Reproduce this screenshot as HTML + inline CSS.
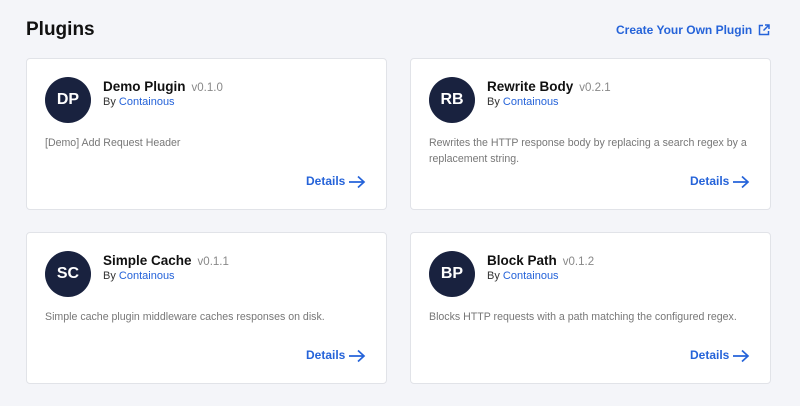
<!DOCTYPE html>
<html><head><style>
*{margin:0;padding:0;box-sizing:border-box}
body{width:800px;height:406px;background:#f4f5f9;font-family:"Liberation Sans",sans-serif;position:relative;overflow:hidden}
h1{position:absolute;left:26px;top:19px;font-size:19px;font-weight:bold;color:#111}
.create{position:absolute;left:616px;top:23px;font-size:12px;font-weight:bold;color:#2563d9}
.create svg{position:absolute;left:142px;top:1px}
.card{position:absolute;width:361px;height:152px;background:#fff;border:1px solid #e1e3e8;border-radius:4px}
.av{position:absolute;left:18px;top:18px;width:46px;height:46px;border-radius:50%;background:#19223f;color:#fff;font-size:16px;font-weight:bold;text-align:center;line-height:46px}
.t{position:absolute;left:76px;top:20px;font-size:13.5px;font-weight:bold;color:#111}
.t span{font-weight:normal;color:#888;font-size:11.5px;margin-left:6px}
.by{position:absolute;left:76px;top:37px;font-size:11px;color:#333}
.by span{color:#2563d9}
.d{position:absolute;left:18px;top:76px;font-size:10.6px;color:#777;line-height:16px;width:330px}
.det{position:absolute;left:279px;top:115px;font-size:12px;font-weight:bold;color:#2563d9}
.det svg{position:absolute;left:42px;top:1px}
</style></head><body>
<h1>Plugins</h1>
<div class="create">Create Your Own Plugin<svg width="12" height="12" viewBox="0 0 12 12" fill="none" stroke="#2563d9" stroke-width="1.5"><path d="M5 1.5H1.5v9h9V7"/><path d="M7 1h4v4M11 1L5.5 6.5"/></svg></div>

<div class="card" style="left:26px;top:58px"><div class="av">DP</div><div class="t">Demo Plugin<span>v0.1.0</span></div><div class="by">By <span>Containous</span></div><div class="d">[Demo] Add Request Header</div><div class="det">Details<svg width="18" height="14" viewBox="0 0 18 14" fill="none" stroke="#2563d9" stroke-width="1.7"><path d="M1 7h15M10 1.5L16 7l-6 5.5"/></svg></div></div>

<div class="card" style="left:410px;top:58px"><div class="av">RB</div><div class="t">Rewrite Body<span>v0.2.1</span></div><div class="by">By <span>Containous</span></div><div class="d">Rewrites the HTTP response body by replacing a search regex by a replacement string.</div><div class="det">Details<svg width="18" height="14" viewBox="0 0 18 14" fill="none" stroke="#2563d9" stroke-width="1.7"><path d="M1 7h15M10 1.5L16 7l-6 5.5"/></svg></div></div>

<div class="card" style="left:26px;top:232px"><div class="av">SC</div><div class="t">Simple Cache<span>v0.1.1</span></div><div class="by">By <span>Containous</span></div><div class="d">Simple cache plugin middleware caches responses on disk.</div><div class="det">Details<svg width="18" height="14" viewBox="0 0 18 14" fill="none" stroke="#2563d9" stroke-width="1.7"><path d="M1 7h15M10 1.5L16 7l-6 5.5"/></svg></div></div>

<div class="card" style="left:410px;top:232px"><div class="av">BP</div><div class="t">Block Path<span>v0.1.2</span></div><div class="by">By <span>Containous</span></div><div class="d">Blocks HTTP requests with a path matching the configured regex.</div><div class="det">Details<svg width="18" height="14" viewBox="0 0 18 14" fill="none" stroke="#2563d9" stroke-width="1.7"><path d="M1 7h15M10 1.5L16 7l-6 5.5"/></svg></div></div>
</body></html>
